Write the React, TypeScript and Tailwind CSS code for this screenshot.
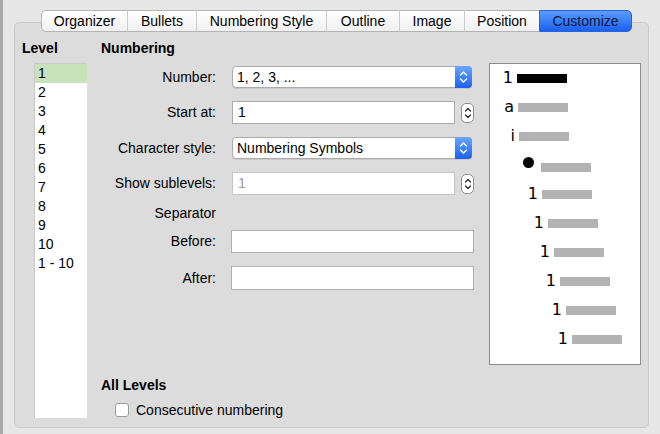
import React from 'react';

const tabs = [
  { label: 'Organizer', w: 'w-[86px]' },
  { label: 'Bullets', w: 'w-[69px]' },
  { label: 'Numbering Style', w: 'w-[130px]' },
  { label: 'Outline', w: 'w-[73px]' },
  { label: 'Image', w: 'w-[65px]' },
  { label: 'Position', w: 'w-[75px]' },
];

const levels = ['1', '2', '3', '4', '5', '6', '7', '8', '9', '10', '1 - 10'];

// preview rows: glyph, left padding of row, bar colour
const preview = [
  { g: '1', pl: 'pl-[3px]', dark: true },
  { g: 'a', pl: 'pl-[4px]' },
  { g: 'i', pl: 'pl-[5px]' },
  { g: '•', pl: 'pl-[27px]', bullet: true },
  { g: '1', pl: 'pl-[28px]' },
  { g: '1', pl: 'pl-[34px]' },
  { g: '1', pl: 'pl-[40px]' },
  { g: '1', pl: 'pl-[46px]' },
  { g: '1', pl: 'pl-[52px]' },
  { g: '1', pl: 'pl-[58px]' },
];

function SelectBox({ value }: { value: string }) {
  return (
    <div className="flex h-[22px] w-[240px] rounded-[4px] border border-[#ababab] bg-white shadow-[0_1px_0_rgba(0,0,0,0.08)]">
      <div className="flex-1 pl-[4px] leading-[20px]">{value}</div>
      <div className="-my-px -mr-px flex w-[17px] items-center justify-center rounded-r-[4px] bg-gradient-to-b from-[#6aa6fb] to-[#1b5ff0]">
        <svg width="9" height="14" viewBox="0 0 9 14" fill="none" stroke="white" strokeWidth="1.4" strokeLinecap="round" strokeLinejoin="round">
          <polyline points="1.5,5 4.5,2 7.5,5" />
          <polyline points="1.5,9 4.5,12 7.5,9" />
        </svg>
      </div>
    </div>
  );
}

function Spinner() {
  return (
    <div className="ml-[6px] flex h-[20px] w-[13px] items-center justify-center rounded-[5px] border border-[#8e8e8e] bg-white">
      <svg width="8" height="14" viewBox="0 0 8 14" fill="none" stroke="#222" strokeWidth="1.2" strokeLinecap="round" strokeLinejoin="round">
        <polyline points="1.5,5 4,2.5 6.5,5" />
        <polyline points="1.5,9 4,11.5 6.5,9" />
      </svg>
    </div>
  );
}

function Row({ label, children, h }: { label: string; children: React.ReactNode; h: string }) {
  return (
    <div className={`flex items-center ${h}`}>
      <div className="w-[115px] text-right">{label}</div>
      <div className="ml-[16px] flex items-center">{children}</div>
    </div>
  );
}

export default function App() {
  return (
    <div
      className="flex h-[434px] w-[660px] overflow-hidden bg-[#e7e7e7] text-[14px] text-black"
      style={{ fontFamily: '"Liberation Sans", Arial, sans-serif' }}
    >
      <div className="w-[3px] bg-[#a9a9a9]" />
      <div className="flex flex-col pt-[10px]">
        <div className="relative z-10 ml-[38px] flex h-[22px]">
          {tabs.map((t, i) => (
            <div
              key={t.label}
              className={`${t.w} flex items-center justify-center border-y border-[#b3b3b3] bg-gradient-to-b from-white to-[#f0f0f0] ${
                i === 0 ? 'rounded-l-[5px] border-l' : 'border-l border-l-[#cdcdcd]'
              }`}
            >
              {t.label}
            </div>
          ))}
          <div className="flex w-[93px] items-center justify-center rounded-r-[5px] border border-[#2a63d8] bg-gradient-to-b from-[#5b9bfa] to-[#1760f1] text-[#0b1640]">
            Customize
          </div>
        </div>

        <div className="-mt-[10px] ml-[11px] flex h-[406px] w-[635px] rounded-[5px] border border-[#cbcbcb] bg-[#dcdcdc] pl-[7px] pt-[17px]">
          {/* level column */}
          <div className="flex w-[65px] flex-col">
            <div className="h-[16px] font-bold leading-[16px]">Level</div>
            <div className="ml-[12px] mt-[7px] h-[355px] w-[53px] border-l border-t border-[#c9c9c9] bg-white">
              {levels.map((l, i) => (
                <div
                  key={l}
                  className={`h-[19px] pl-[3px] leading-[19px] ${i === 0 ? 'bg-[#c7e3bb]' : ''}`}
                >
                  {l}
                </div>
              ))}
            </div>
          </div>

          {/* numbering column */}
          <div className="ml-[14px] flex h-[378px] w-[374px] flex-col">
            <div className="h-[16px] font-bold leading-[16px]">Numbering</div>
            <div className="mt-[10px]">
              <Row label="Number:" h="h-[22px]">
                <SelectBox value="1, 2, 3, ..." />
              </Row>
            </div>
            <div className="mt-[13px]">
              <Row label="Start at:" h="h-[23px]">
                <div className="h-[23px] w-[223px] border border-[#a9a9a9] bg-white pl-[5px] leading-[21px]">1</div>
                <Spinner />
              </Row>
            </div>
            <div className="mt-[13px]">
              <Row label="Character style:" h="h-[22px]">
                <SelectBox value="Numbering Symbols" />
              </Row>
            </div>
            <div className="mt-[13px]">
              <Row label="Show sublevels:" h="h-[23px]">
                <div className="h-[23px] w-[223px] border border-[#c4c4c4] bg-white pl-[5px] leading-[21px] text-[#9b9b9b]">1</div>
                <Spinner />
              </Row>
            </div>
            <div className="mt-[10px] flex h-[16px] items-center">
              <div className="w-[115px] text-right">Separator</div>
            </div>
            <div className="mt-[9px]">
              <Row label="Before:" h="h-[23px]">
                <div className="-ml-px h-[23px] w-[243px] border border-[#b0b0b0] bg-white" />
              </Row>
            </div>
            <div className="mt-[13px]">
              <Row label="After:" h="h-[24px]">
                <div className="-ml-px h-[24px] w-[243px] border border-[#b0b0b0] bg-white" />
              </Row>
            </div>

            <div className="mt-auto h-[16px] font-bold leading-[16px]">All Levels</div>
            <div className="ml-[14px] mt-[9px] flex h-[16px] items-center">
              <div className="h-[14px] w-[14px] rounded-[3px] border border-[#9c9c9c] bg-white" />
              <span className="ml-[7px]">Consecutive numbering</span>
            </div>
          </div>

          {/* preview */}
          <div
            className="ml-[14px] mt-[23px] h-[302px] w-[152px] border border-[#8c8c8c] bg-white pt-[6px]"
            style={{ fontFamily: '"DejaVu Sans", sans-serif' }}
          >
            {preview.map((p, i) => (
              <div key={i} className={`flex h-[29px] items-baseline ${p.pl}`}>
                <div className="w-[20px] text-right text-[16px] leading-[16px]">
                  {p.bullet ? (
                    <span className="mb-[4px] mr-[3px] inline-block h-[11px] w-[11px] rounded-full bg-black align-baseline" />
                  ) : (
                    p.g
                  )}
                </div>
                <div className={`ml-[4px] h-[9px] w-[50px] ${p.dark ? 'bg-black' : 'bg-[#b3b3b3]'}`} />
              </div>
            ))}
          </div>
        </div>
      </div>
    </div>
  );
}
